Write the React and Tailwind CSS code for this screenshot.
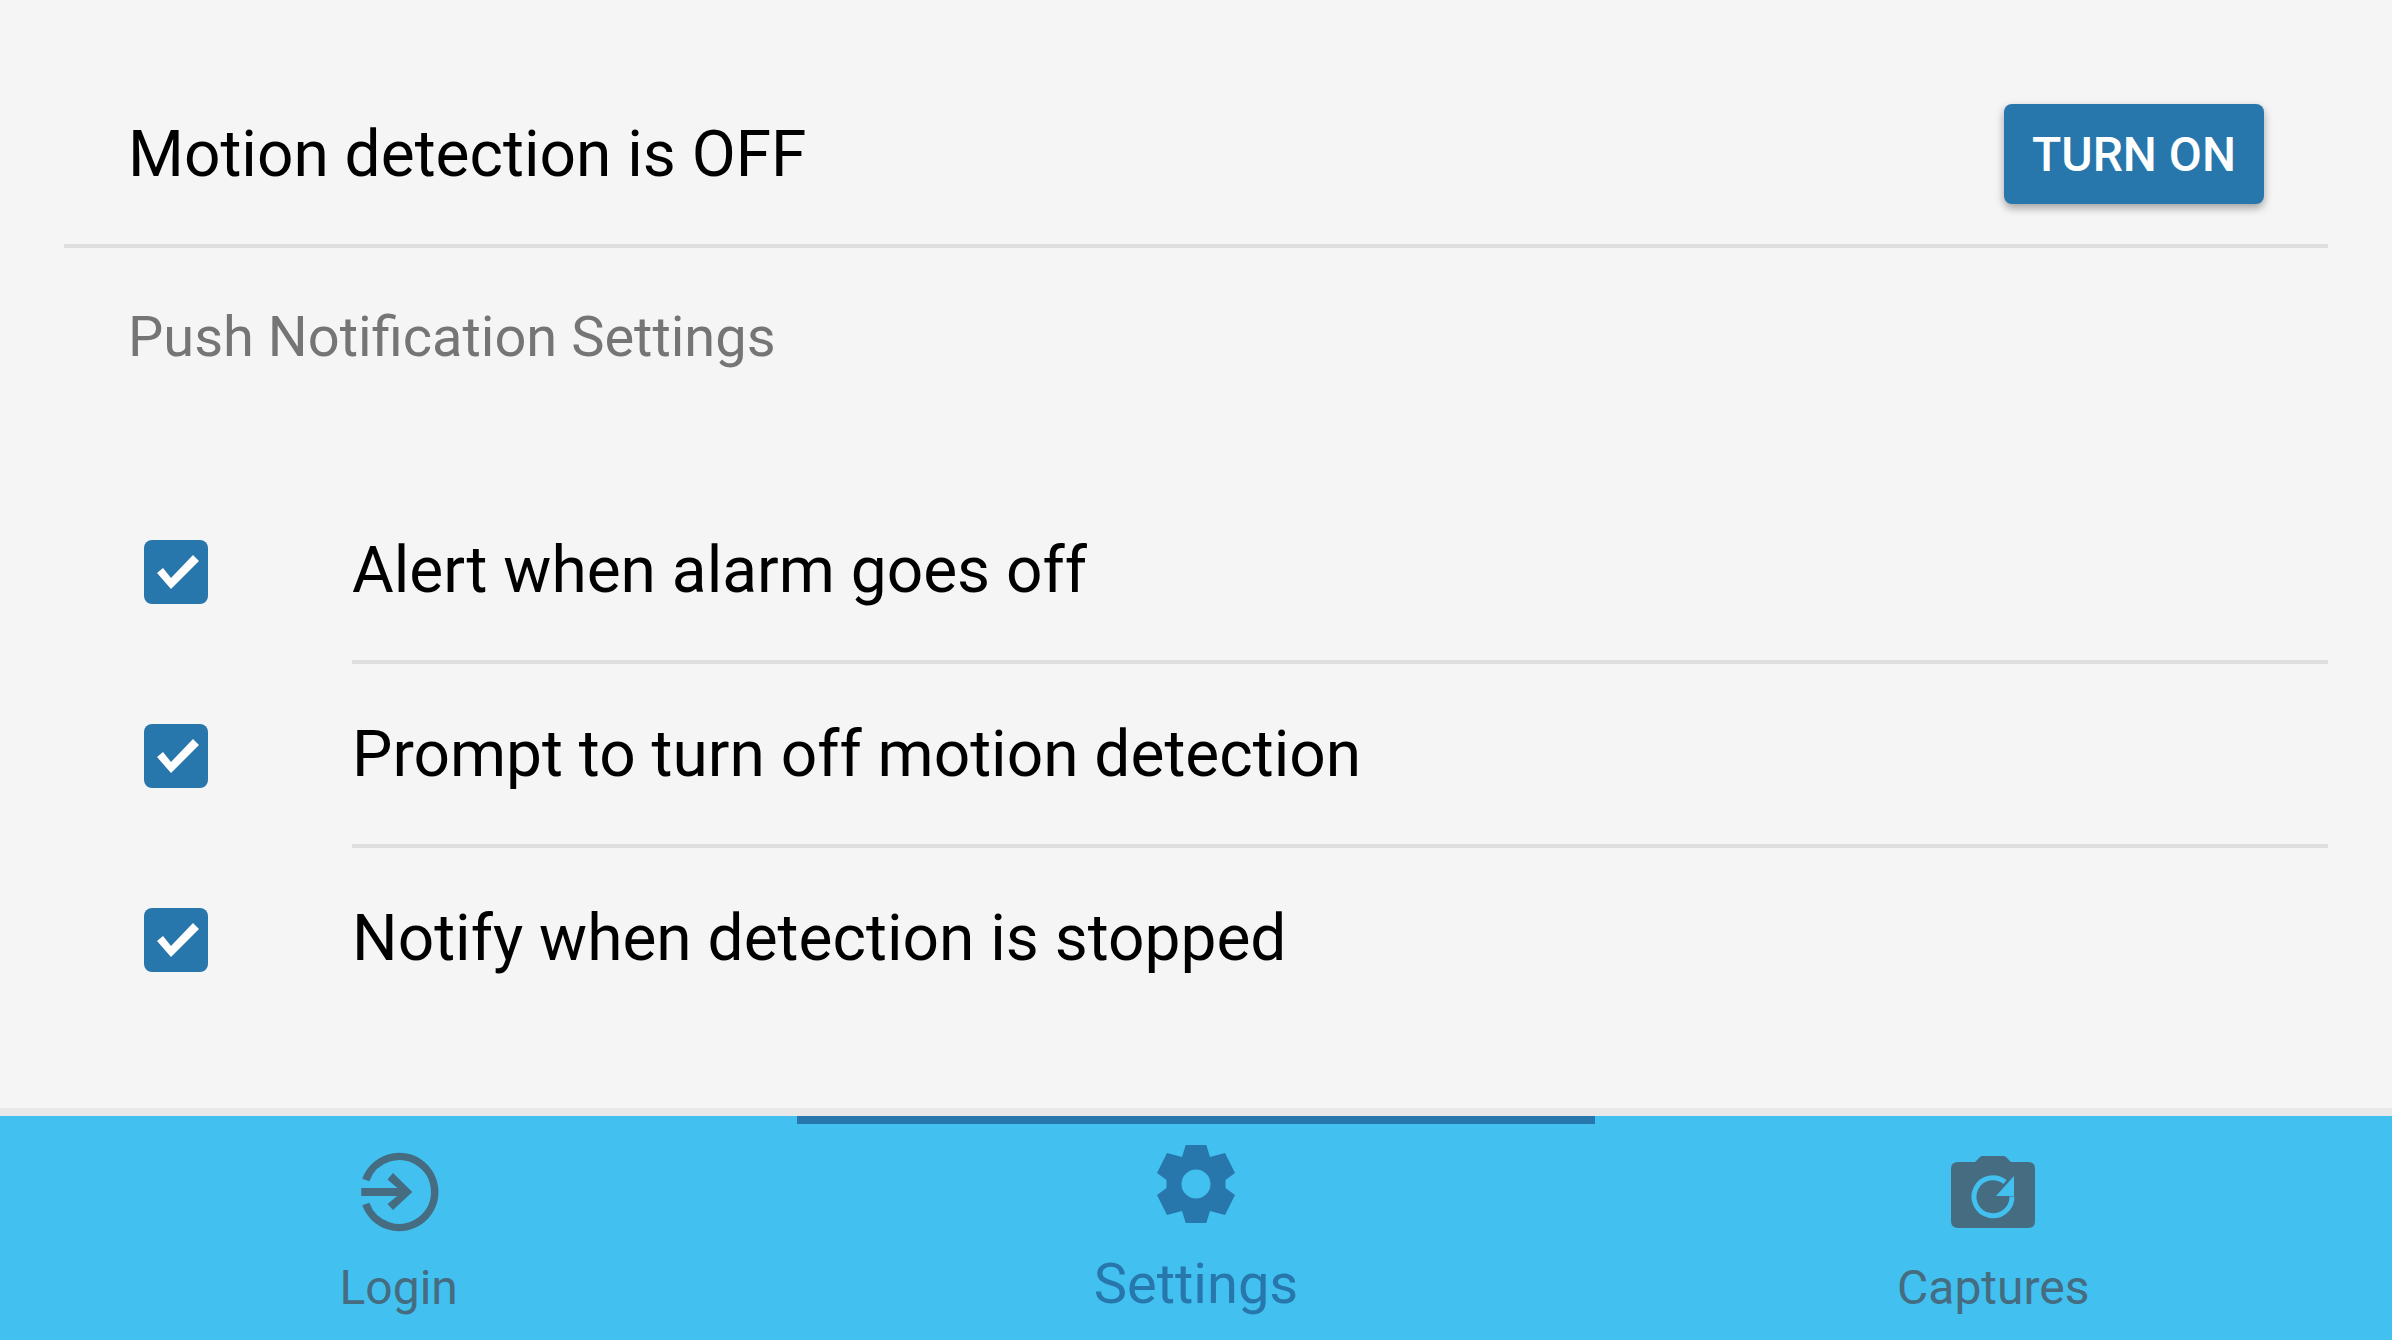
const BLUE = "#2877ac";
const SLATE = "#456c80";
const SKY = "#42c0f0";

function Check() {
  return (
    <div className="w-16 h-16 rounded-lg bg-[#2877ac]">
      <svg width="64" height="64" viewBox="0 0 64 64">
        <path d="M13 33 L19 28 L27 38 L49 15 L55 21 L27 49 Z" fill="#fff" />
      </svg>
    </div>
  );
}

function Row({ label, divider }) {
  return (
    <div className="flex h-[184px]">
      <div className="w-[288px] pl-20 flex items-center shrink-0"><Check /></div>
      <div className={"flex-1 flex items-center text-[64px] text-black " + (divider ? "border-b-4 border-[#dedede]" : "pb-1")}>
        <span className="pt-[2px]">{label}</span>
      </div>
    </div>
  );
}

function LoginIcon() {
  return (
    <svg width="80" height="80" viewBox="0 0 80 80">
      <path d="M6.8 28 A35.5 35.5 0 1 1 6.8 52" fill="none" stroke={SLATE} strokeWidth="7.5" />
      <path d="M2.3 36 H46 V44 H2.3 Z" fill={SLATE} />
      <path d="M34 21 L53.3 40 L34 58 L28.5 52 L43 40 L28.5 27.5 Z" fill={SLATE} />
    </svg>
  );
}

function GearIcon() {
  return (
    <svg width="96" height="96" viewBox="-48 -48 96 96" fill={BLUE}>
      <path
        fillRule="evenodd"
        d="M-10.3 -39 H10.3 L14 -27 L29 -31 L39 -11 L29.5 -4 V4 L39 11 L29 31 L14 27 L10.3 39 H-10.3 L-14 27 L-29 31 L-39 11 L-29.5 4 V-4 L-39 -11 L-29 -31 L-14 -27 Z M14.5 0 A14.5 14.5 0 1 0 -14.5 0 A14.5 14.5 0 1 0 14.5 0 Z"
      />
    </svg>
  );
}

function CameraIcon() {
  return (
    <svg width="84" height="72" viewBox="0 0 84 72">
      <path fill={SLATE} d="M7 6 H24 L29 1 Q30 0 32 0 H52 Q54 0 55 1 L60 6 H77 Q84 6 84 13 V65 Q84 72 77 72 H7 Q0 72 0 65 V13 Q0 6 7 6 Z" />
      <path d="M54 26 A19 19 0 1 0 61 40.5" fill="none" stroke={SKY} strokeWidth="5" />
      <path d="M63 20 V40 H45 Z" fill={SKY} />
    </svg>
  );
}

function Tab({ label, active, icon }) {
  return (
    <div className={"flex-1 h-full flex flex-col items-center relative " + (active ? "text-[#2877ac]" : "text-[#456c80]")}>
      {active && <div className="absolute top-0 inset-x-0 h-2 bg-[#2877ac]" />}
      <div className={active ? "h-[96px] mt-5 flex items-center" : "h-[96px] mt-7 flex items-center"}>{icon}</div>
      <span className={active ? "text-[56px] leading-[66px] mt-[19px]" : "text-[48px] leading-[56px] mt-5"}>{label}</span>
    </div>
  );
}

export default function App() {
  return (
    <div className="w-[2392px] h-[1340px] flex flex-col bg-[#f5f5f5] overflow-hidden font-['Roboto',sans-serif]">
      <div className="flex-1 min-h-0 px-16">
        <div className="h-[248px] border-b-4 border-[#dedede] flex items-center justify-between px-16 pt-16">
          <span className="text-[64px] text-black pt-[2px]">Motion detection is OFF</span>
          <button className="w-[260px] h-[100px] pt-[2px] rounded-lg bg-[#2877ac] text-white text-[48px] font-medium shadow-[0_4px_8px_rgba(0,0,0,0.35)]">TURN ON</button>
        </div>
        <div className="pl-16 mt-14 text-[56px] leading-[66px] text-[#757575]">Push Notification Settings</div>
        <div className="mt-[110px]">
          <Row label="Alert when alarm goes off" divider />
          <Row label="Prompt to turn off motion detection" divider />
          <Row label="Notify when detection is stopped" />
        </div>
      </div>
      <div className="h-2 bg-[#e8e8e8]" />
      <div className="h-[224px] bg-[#42c0f0] flex">
        <Tab label="Login" icon={<LoginIcon />} />
        <Tab label="Settings" active icon={<GearIcon />} />
        <Tab label="Captures" icon={<CameraIcon />} />
      </div>
    </div>
  );
}
